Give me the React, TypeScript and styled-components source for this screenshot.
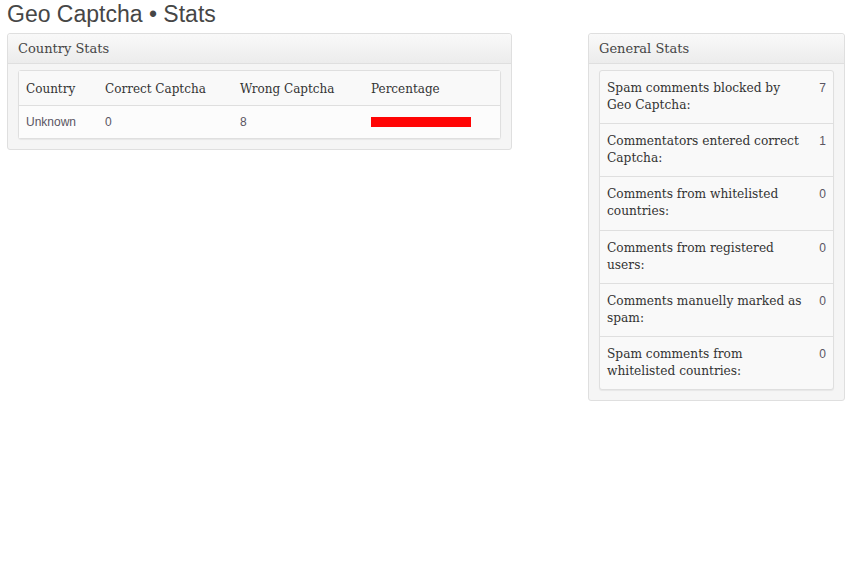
import React from 'react';
import styled, { createGlobalStyle } from 'styled-components';

const GlobalStyle = createGlobalStyle`
  html, body {
    margin: 0;
    padding: 0;
    background: #fff;
  }
  body {
    font-family: "Liberation Sans", Arial, sans-serif;
    color: #333;
  }
`;

const Wrap = styled.div`
  padding: 2px 9px 0 7px;
`;

const PageTitle = styled.h2`
  margin: 0 0 6px;
  font-family: "Liberation Sans", Arial, sans-serif;
  font-size: 23px;
  font-weight: normal;
  line-height: 25px;
  color: #464646;
`;

const Columns = styled.div`
  display: flex;
  align-items: flex-start;
  justify-content: space-between;
`;

const Postbox = styled.div<{ $width: number }>`
  width: ${({ $width }) => $width}px;
  box-sizing: border-box;
  border: 1px solid #dfdfdf;
  border-radius: 3px;
  background: #f5f5f5;
  box-shadow: inset 0 1px 0 #fff;
`;

const BoxHeader = styled.h3`
  margin: 0;
  height: 29px;
  padding: 0 10px;
  display: flex;
  align-items: center;
  border-bottom: 1px solid #dfdfdf;
  border-radius: 3px 3px 0 0;
  background: linear-gradient(to bottom, #f9f9f9, #ececec);
  font-family: "DejaVu Serif", Georgia, serif;
  font-size: 13px;
  font-weight: normal;
  color: #464646;
`;

const BoxBody = styled.div`
  padding: 6px 10px 10px;
`;

const Table = styled.table`
  width: 100%;
  table-layout: fixed;
  border-collapse: separate;
  border-spacing: 0;
  background: #f9f9f9;
  border: 1px solid #dfdfdf;
  border-radius: 3px;
  box-shadow: 0 1px 1px rgba(0, 0, 0, 0.06);
`;

const HeadCell = styled.th<{ $width?: number }>`
  width: ${({ $width }) => ($width ? `${$width}px` : 'auto')};
  height: 33px;
  padding: 1px 7px 0;
  text-align: left;
  vertical-align: middle;
  border-bottom: 1px solid #dfdfdf;
  font-family: "DejaVu Serif", Georgia, serif;
  font-size: 12px;
  font-weight: normal;
  color: #333;
  background: #f9f9f9;
`;

const DataCell = styled.td`
  height: 32px;
  padding: 0 7px;
  vertical-align: middle;
  font-family: "Liberation Sans", Arial, sans-serif;
  font-size: 12px;
  color: #5a5562;
  background: #fcfcfc;
`;

const Bar = styled.div`
  height: 10px;
  background: #ff0505;
`;

const StatRow = styled.tr<{ $last?: boolean }>`
  & > td {
    border-bottom: ${({ $last }) => ($last ? 'none' : '1px solid #dfdfdf')};
  }
`;

const StatLabel = styled.td`
  padding: 9px 7px 8px 7px;
  height: 35.2px;
  vertical-align: top;
  font-family: "DejaVu Serif", Georgia, serif;
  font-size: 12.2px;
  line-height: 17px;
  color: #333;
`;

const StatValue = styled.td`
  padding: 9px 7px 0 0;
  width: 14px;
  vertical-align: top;
  text-align: right;
  font-family: "Liberation Sans", Arial, sans-serif;
  font-size: 12px;
  line-height: 17px;
  color: #5a5562;
`;

const countries = [{ name: 'Unknown', correct: 0, wrong: 8, percent: 100 }];

const generalStats = [
  { label: 'Spam comments blocked by Geo Captcha:', value: 7 },
  { label: 'Commentators entered correct Captcha:', value: 1 },
  { label: 'Comments from whitelisted countries:', value: 0 },
  { label: 'Comments from registered users:', value: 0 },
  { label: 'Comments manuelly marked as spam:', value: 0 },
  { label: 'Spam comments from whitelisted countries:', value: 0 },
];

const App: React.FC = () => {
  return (
    <>
      <GlobalStyle />
      <Wrap>
        <PageTitle>Geo Captcha • Stats</PageTitle>
        <Columns>
          <Postbox $width={505}>
            <BoxHeader>Country Stats</BoxHeader>
            <BoxBody>
              <Table>
                <thead>
                  <tr>
                    <HeadCell $width={65}>Country</HeadCell>
                    <HeadCell $width={121}>Correct Captcha</HeadCell>
                    <HeadCell $width={117}>Wrong Captcha</HeadCell>
                    <HeadCell>Percentage</HeadCell>
                  </tr>
                </thead>
                <tbody>
                  {countries.map((c) => (
                    <tr key={c.name}>
                      <DataCell>{c.name}</DataCell>
                      <DataCell>{c.correct}</DataCell>
                      <DataCell>{c.wrong}</DataCell>
                      <DataCell>
                        <Bar style={{ width: c.percent }} />
                      </DataCell>
                    </tr>
                  ))}
                </tbody>
              </Table>
            </BoxBody>
          </Postbox>

          <Postbox $width={257}>
            <BoxHeader>General Stats</BoxHeader>
            <BoxBody>
              <Table>
                <tbody>
                  {generalStats.map((s, i) => (
                    <StatRow key={s.label} $last={i === generalStats.length - 1}>
                      <StatLabel>{s.label}</StatLabel>
                      <StatValue>{s.value}</StatValue>
                    </StatRow>
                  ))}
                </tbody>
              </Table>
            </BoxBody>
          </Postbox>
        </Columns>
      </Wrap>
    </>
  );
};

export default App;
